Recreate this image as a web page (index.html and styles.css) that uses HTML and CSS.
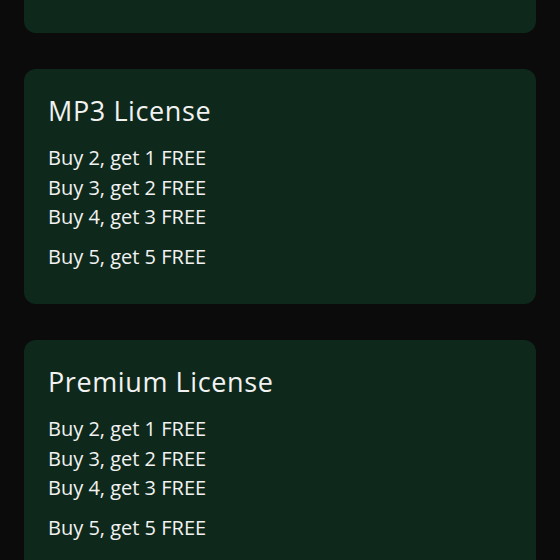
FILE: index.html
```html
<!DOCTYPE html>
<html lang="en">
<head>
    <meta charset="UTF-8">
    <meta name="viewport" content="width=device-width, initial-scale=1.0">
    <title>License Deals</title>
    <link rel="stylesheet" href="styles.css">
</head>
<body>
    <div class="deals">
        <!-- previous card, scrolled mostly out of view -->
        <div class="card card-cut"></div>

        <div class="card">
            <h2 class="card-title">MP3 License</h2>
            <ul class="offer-list">
                <li>Buy 2, get 1 FREE</li>
                <li>Buy 3, get 2 FREE</li>
                <li>Buy 4, get 3 FREE</li>
                <li class="offer-best">Buy 5, get 5 FREE</li>
            </ul>
        </div>

        <div class="card">
            <h2 class="card-title">Premium License</h2>
            <ul class="offer-list">
                <li>Buy 2, get 1 FREE</li>
                <li>Buy 3, get 2 FREE</li>
                <li>Buy 4, get 3 FREE</li>
                <li class="offer-best">Buy 5, get 5 FREE</li>
            </ul>
        </div>
    </div>
</body>
</html>
```

FILE: styles.css
```css
* {
    margin: 0;
    padding: 0;
    box-sizing: border-box;
}

body {
    background-color: #0b0b0b;
    color: #f2f2f2;
    font-family: "Open Sans", "Noto Sans", sans-serif;
    overflow: hidden;
}

.deals {
    display: flex;
    flex-direction: column;
    gap: 36px;
    padding: 0 24px;
}

.card {
    background-color: #0e291b;
    border-radius: 12px;
    padding: 23px 24px 24px;
    height: 235px;
}

.card-cut {
    height: 33px;
    padding: 0;
    border-radius: 0 0 12px 12px;
}

.card-title {
    font-size: 27px;
    font-weight: 500;
    line-height: 38px;
    letter-spacing: 0.6px;
    margin-bottom: 13px;
}

.offer-list {
    list-style: none;
    font-size: 20px;
    line-height: 29.5px;
}

.offer-best {
    margin-top: 10px;
}
```
